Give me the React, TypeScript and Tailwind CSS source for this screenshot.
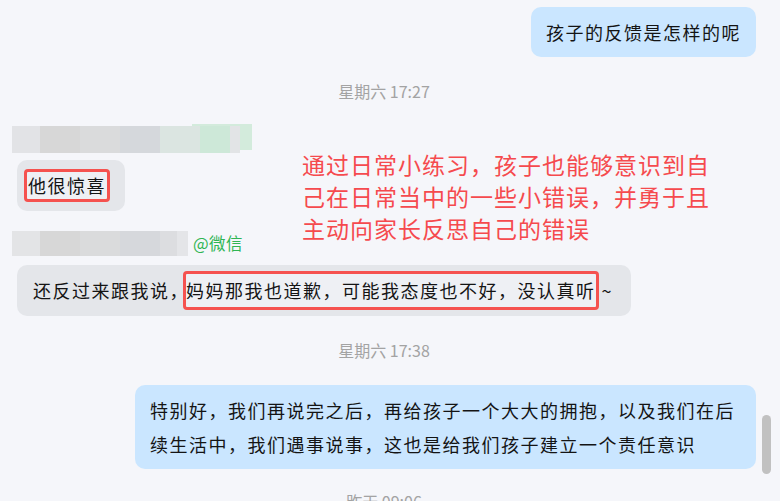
import React from "react";

const Bar1 = () => (
  <div className="relative h-[29px] w-full">
    <div className="absolute left-[192px] top-0 w-[60px] h-[26px] bg-[#d3ebdc]" />
    <div className="absolute left-[12px] top-[2px] h-[27px] flex">
      <div className="w-[28px] h-full bg-[#e2e3e6]" />
      <div className="w-[40px] h-full bg-[#d7d7d7]" />
      <div className="w-[40px] h-full bg-[#dadbdc]" />
      <div className="w-[40px] h-full bg-[#d5d8dc]" />
      <div className="w-[40px] h-full bg-[#dbe5e1]" />
      <div className="w-[30px] h-full bg-[#cde8d8]" />
      <div className="w-[10px] h-full bg-[#e2e4e6]" />
    </div>
  </div>
);

const Bar2 = () => (
  <div className="relative h-[25px] w-full flex items-center">
    <div className="ml-[12px] h-[25px] flex">
      <div className="w-[28px] h-full bg-[#e3e4e6]" />
      <div className="w-[40px] h-full bg-[#d7d7d7]" />
      <div className="w-[40px] h-full bg-[#dadbdc]" />
      <div className="w-[40px] h-full bg-[#d6d8dc]" />
      <div className="w-[17px] h-full bg-[#dcdde0]" />
      <div className="w-[11px] h-full bg-[#e4e5e8]" />
    </div>
    <span className="ml-[5px] text-[16.5px] leading-[25px] text-[#2fb553] tracking-[0.5px]">@微信</span>
  </div>
);

export default function App() {
  return (
    <div
      className="relative w-[780px] h-[501px] overflow-hidden bg-[#f5f6fa] text-[#141414]"
      style={{ fontFamily: "'Noto Sans CJK SC', 'Noto Sans', sans-serif" }}
    >
      <div className="flex flex-col">
        <div className="flex justify-end pr-[24px] pt-[7px]">
          <div className="h-[50px] px-[15px] flex items-center rounded-[10px] bg-[#cae6ff] text-[18px] tracking-[1.5px]">
            孩子的反馈是怎样的呢
          </div>
        </div>

        <div className="mt-[25px] w-[768px] h-[18px] leading-[18px] text-center text-[16px] text-[#a3a3a3]">星期六 17:27</div>

        <div className="mt-[24px]">
          <Bar1 />
        </div>

        <div className="mt-[7px] pl-[17px] flex">
          <div className="h-[51px] pl-[7px] pr-[15px] flex items-center rounded-[10px] bg-[#e4e6ea]">
            <span className="h-[33px] flex items-center border-[3px] border-[#f5524f] rounded-[4px] px-[1px] bg-[#eef0f4] text-[18px] tracking-[1.5px]">
              他很惊喜
            </span>
          </div>
        </div>

        <div className="mt-[20px]">
          <Bar2 />
        </div>

        <div className="mt-[9px] pl-[17px] flex">
          <div className="h-[51px] pl-[16px] pr-[18px] flex items-center rounded-[10px] bg-[#e4e6ea] text-[18px] tracking-[1.5px] whitespace-nowrap">
            <span>还反过来跟我说，</span>
            <span className="ml-[-6px] h-[39px] flex items-center border-[3px] border-[#f5524f] rounded-[4px] bg-[#eef0f4]">
              妈妈那我也道歉，可能我态度也不好，没认真听
            </span>
            <span className="ml-[3px]">~</span>
          </div>
        </div>

        <div className="mt-[25px] w-[768px] h-[18px] leading-[18px] text-center text-[16px] text-[#a3a3a3]">星期六 17:38</div>

        <div className="mt-[26px] flex justify-end pr-[24px]">
          <div className="w-[621px] px-[15px] py-[8px] rounded-[10px] bg-[#cae6ff] text-[18px] leading-[34px] tracking-[1.5px]">
            特别好，我们再说完之后，再给孩子一个大大的拥抱，以及我们在后续生活中，我们遇事说事，这也是给我们孩子建立一个责任意识
          </div>
        </div>

        <div className="mt-[23px] w-[768px] h-[18px] leading-[18px] text-center text-[16px] text-[#a3a3a3]">昨天 09:06</div>
      </div>

      <div className="absolute left-[302px] top-[148px] text-[23px] leading-[32px] tracking-[1px] text-[#f54a4e]">
        通过日常小练习，孩子也能够意识到自
        <br />
        己在日常当中的一些小错误，并勇于且
        <br />
        主动向家长反思自己的错误
      </div>

      <div className="absolute left-[762px] top-[415px] w-[9px] h-[59px] rounded-full bg-[#c1c1c1]" />
    </div>
  );
}
